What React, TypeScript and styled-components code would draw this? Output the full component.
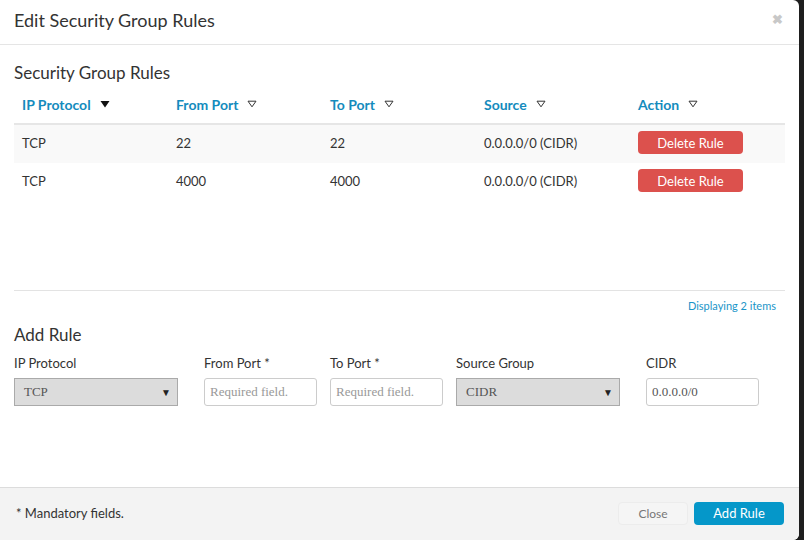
import React from "react";
import styled, { createGlobalStyle } from "styled-components";

const Global = createGlobalStyle`
  html, body { margin: 0; padding: 0; background: #2a2a2a; overflow: hidden; }
  body { font-family: "Lato", "Open Sans", sans-serif; color: #333; }
  * { box-sizing: border-box; }
`;

const Stage = styled.div`
  width: 804px;
  height: 540px;
  display: flex;
  background: linear-gradient(90deg, #3a3a3a, #1e1e1e);
`;

const Modal = styled.div`
  width: 799px;
  height: 540px;
  background: #fff;
  border-radius: 0 6px 6px 0;
  display: flex;
  flex-direction: column;
  overflow: hidden;
`;

const Header = styled.div`
  height: 45px;
  flex: none;
  display: flex;
  align-items: center;
  justify-content: space-between;
  padding: 0 16px 4px 14px;
  border-bottom: 1px solid #e5e5e5;
`;

const Title = styled.h4`
  margin: 0;
  font-size: 18px;
  font-weight: 400;
  color: #333;
`;

const CloseX = styled.span`
  color: #c8c8c8;
  font-size: 13px;
  font-weight: 700;
  line-height: 1;
  margin-bottom: 2px;
`;

const Body = styled.div`
  flex: 1;
  padding: 17px 14px 0 14px;
`;

const SectionTitle = styled.h3`
  margin: 0;
  font-size: 17px;
  line-height: 22px;
  font-weight: 400;
  color: #333;
`;

const TableArea = styled.div`
  margin-top: 3px;
  height: 204px;
  border-bottom: 1px solid #e3e3e3;
`;

const Row = styled.div<{ $head?: boolean; $stripe?: boolean }>`
  display: grid;
  grid-template-columns: repeat(5, 154px);
  align-items: center;
  height: 38px;
  background: ${(p) => (p.$stripe ? "#f9f9f9" : "transparent")};
  border-bottom: ${(p) => (p.$head ? "2px solid #e6e6e6" : "none")};
  padding-bottom: ${(p) => (p.$head ? "2px" : "3px")};
`;

const HeadCell = styled.div`
  padding-left: 8px;
  color: #148bbd;
  font-size: 14px;
  font-weight: 700;
  display: flex;
  align-items: center;
  gap: 9px;
`;

const Cell = styled.div`
  padding-left: 8px;
  font-size: 13px;
  color: #333;
`;

const SortArrow = styled.svg`
  width: 10px;
  height: 8px;
`;

const DeleteBtn = styled.button`
  width: 105px;
  height: 23px;
  border: none;
  border-radius: 4px;
  background: #dc514d;
  color: #fff;
  font-family: inherit;
  font-size: 13px;
  padding: 0;
  cursor: pointer;
`;

const Displaying = styled.div`
  text-align: right;
  padding-right: 9px;
  margin-top: 8px;
  font-size: 11px;
  color: #1a95c8;
`;

const AddTitle = styled(SectionTitle)`
  margin-top: 12px;
`;

const FormGrid = styled.div`
  display: grid;
  grid-template-columns: 190px 126px 126px 190px 1fr;
  margin-top: 9px;
  row-gap: 7px;
`;

const Label = styled.label`
  font-size: 13px;
  color: #333;
  line-height: 16px;
`;

const SelectBox = styled.div`
  width: 164px;
  height: 28px;
  background: #dcdcdc;
  border: 1px solid #aaa;
  display: flex;
  align-items: center;
  justify-content: space-between;
  padding: 0 6px 0 9px;
  font-family: "Liberation Serif", serif;
  font-size: 13px;
  color: #555;
`;

const Caret = styled.span`
  font-size: 10px;
  color: #222;
`;

const Input = styled.input`
  width: 113px;
  height: 28px;
  border: 1px solid #ccc;
  border-radius: 3px;
  padding: 0 5px;
  font-family: "Liberation Serif", serif;
  font-size: 13px;
  color: #555;
  outline: none;
  &::placeholder { color: #999; }
`;

const Footer = styled.div`
  height: 53px;
  flex: none;
  background: #f3f3f3;
  border-top: 1px solid #dcdcdc;
  display: flex;
  align-items: center;
  padding: 0 15px 2px 16px;
  gap: 6px;
`;

const Note = styled.span`
  flex: 1;
  font-size: 13px;
  color: #333;
`;

const Button = styled.button<{ $primary?: boolean }>`
  height: 23px;
  width: ${(p) => (p.$primary ? "90px" : "70px")};
  border-radius: 4px;
  border: ${(p) => (p.$primary ? "none" : "1px solid #ececec")};
  background: ${(p) => (p.$primary ? "#0597c9" : "#f5f5f5")};
  color: ${(p) => (p.$primary ? "#fff" : "#777")};
  font-family: inherit;
  font-size: ${(p) => (p.$primary ? "13px" : "12px")};
  padding: 0;
`;

const Arrow = ({ filled }: { filled?: boolean }) => (
  <SortArrow viewBox="0 0 10 8">
    {filled ? (
      <path d="M0.5 1 L9.5 1 L5 7.5 Z" fill="#111" />
    ) : (
      <path d="M1 1.2 L9 1.2 L5 6.8 Z" fill="none" stroke="#333" strokeWidth="1" strokeLinejoin="round" />
    )}
  </SortArrow>
);

const rules = [
  { proto: "TCP", from: "22", to: "22", source: "0.0.0.0/0 (CIDR)" },
  { proto: "TCP", from: "4000", to: "4000", source: "0.0.0.0/0 (CIDR)" },
];

export default function App() {
  return (
    <>
      <Global />
      <Stage>
        <Modal>
          <Header>
            <Title>Edit Security Group Rules</Title>
            <CloseX>✖</CloseX>
          </Header>
          <Body>
            <SectionTitle>Security Group Rules</SectionTitle>
            <TableArea>
              <Row $head>
                <HeadCell>IP Protocol <Arrow filled /></HeadCell>
                <HeadCell>From Port <Arrow /></HeadCell>
                <HeadCell>To Port <Arrow /></HeadCell>
                <HeadCell>Source <Arrow /></HeadCell>
                <HeadCell>Action <Arrow /></HeadCell>
              </Row>
              {rules.map((r, i) => (
                <Row key={i} $stripe={i % 2 === 0}>
                  <Cell>{r.proto}</Cell>
                  <Cell>{r.from}</Cell>
                  <Cell>{r.to}</Cell>
                  <Cell>{r.source}</Cell>
                  <Cell><DeleteBtn>Delete Rule</DeleteBtn></Cell>
                </Row>
              ))}
            </TableArea>
            <Displaying>Displaying 2 items</Displaying>
            <AddTitle>Add Rule</AddTitle>
            <FormGrid>
              <Label>IP Protocol</Label>
              <Label>From Port *</Label>
              <Label>To Port *</Label>
              <Label>Source Group</Label>
              <Label>CIDR</Label>
              <SelectBox>TCP<Caret>▼</Caret></SelectBox>
              <Input placeholder="Required field." />
              <Input placeholder="Required field." />
              <SelectBox>CIDR<Caret>▼</Caret></SelectBox>
              <Input defaultValue="0.0.0.0/0" />
            </FormGrid>
          </Body>
          <Footer>
            <Note>* Mandatory fields.</Note>
            <Button>Close</Button>
            <Button $primary>Add Rule</Button>
          </Footer>
        </Modal>
      </Stage>
    </>
  );
}
